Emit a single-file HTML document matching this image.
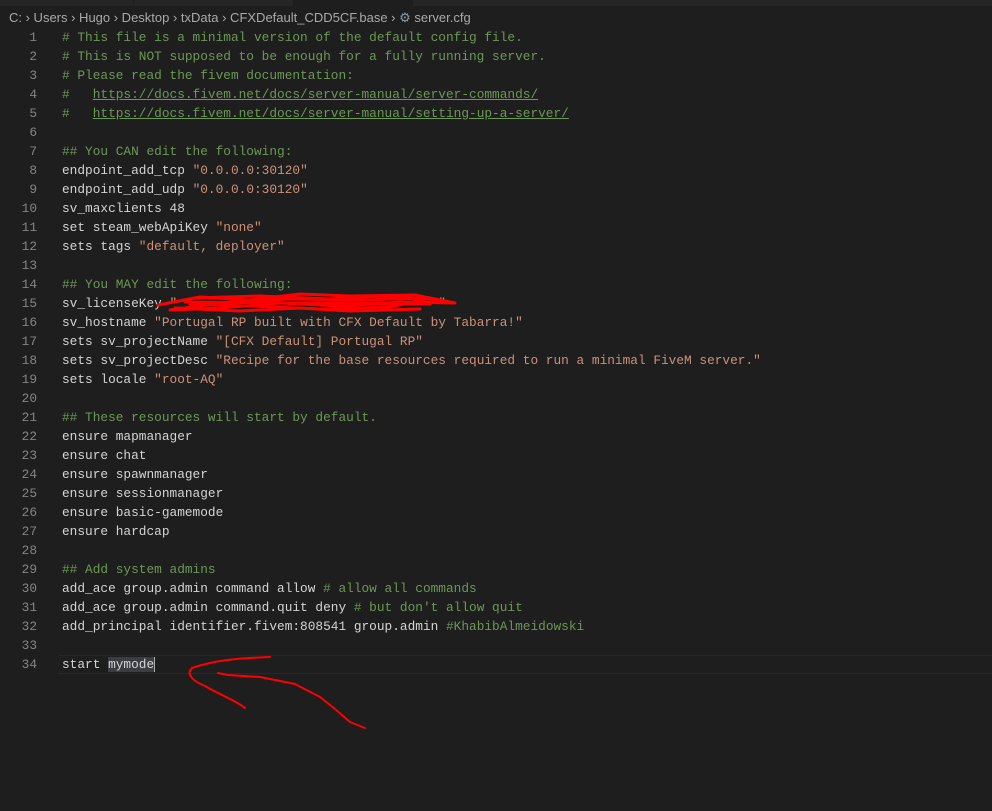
<!DOCTYPE html>
<html><head><meta charset="utf-8"><style>
html,body{margin:0;padding:0;background:#1e1e1e;width:992px;height:811px;overflow:hidden;position:relative}
.tabs{position:absolute;top:0;left:0;width:992px;height:6px;background:#252526}
.bc{position:absolute;top:8px;left:9px;font:13px "Liberation Sans",sans-serif;color:#a9a9a9;white-space:pre;line-height:19px}
.ln{position:absolute;left:0;width:37px;text-align:right;color:#858585;font:12.8px "Liberation Mono",monospace;line-height:19px}
.cd{position:absolute;left:62px;color:#d4d4d4;font:12.8px "Liberation Mono",monospace;line-height:19px;white-space:pre}
.c{color:#6a9955}.s{color:#ce9178}.u{text-decoration:underline}
.cur{position:absolute;left:58px;top:655px;width:934px;height:17px;border-top:1px solid #282828;border-bottom:1px solid #282828}
</style></head><body>
<div class="tabs"><div style="position:absolute;left:293px;width:120px;height:6px;background:#1e1e1e"></div><div style="position:absolute;left:133px;width:1px;height:6px;background:#1e1e1e"></div></div>
<div class="bc">C: › Users › Hugo › Desktop › txData › CFXDefault_CDD5CF.base › <span style="color:#8a9aa8">⚙</span> server.cfg</div>
<div class="cur"></div>
<div id="c"></div>
<script>
const L=[
'<span class="c"># This file is a minimal version of the default config file.</span>',
'<span class="c"># This is NOT supposed to be enough for a fully running server.</span>',
'<span class="c"># Please read the fivem documentation:</span>',
'<span class="c">#   <span class="u">https://docs.fivem.net/docs/server-manual/server-commands/</span></span>',
'<span class="c">#   <span class="u">https://docs.fivem.net/docs/server-manual/setting-up-a-server/</span></span>',
'',
'<span class="c">## You CAN edit the following:</span>',
'endpoint_add_tcp <span class="s">"0.0.0.0:30120"</span>',
'endpoint_add_udp <span class="s">"0.0.0.0:30120"</span>',
'sv_maxclients 48',
'set steam_webApiKey <span class="s">"none"</span>',
'sets tags <span class="s">"default, deployer"</span>',
'',
'<span class="c">## You MAY edit the following:</span>',
'sv_licenseKey <span class="s">"                                  "</span>',
'sv_hostname <span class="s">"Portugal RP built with CFX Default by Tabarra!"</span>',
'sets sv_projectName <span class="s">"[CFX Default] Portugal RP"</span>',
'sets sv_projectDesc <span class="s">"Recipe for the base resources required to run a minimal FiveM server."</span>',
'sets locale <span class="s">"root-AQ"</span>',
'',
'<span class="c">## These resources will start by default.</span>',
'ensure mapmanager','ensure chat','ensure spawnmanager','ensure sessionmanager','ensure basic-gamemode','ensure hardcap',
'',
'<span class="c">## Add system admins</span>',
'add_ace group.admin command allow <span class="c"># allow all commands</span>',
'add_ace group.admin command.quit deny <span class="c"># but don\'t allow quit</span>',
'add_principal identifier.fivem:808541 group.admin <span class="c">#KhabibAlmeidowski</span>',
'',
'start <span style="background:#3a3d41">mymode</span><span style="border-left:1px solid #aeafad"></span>'];
let h='';L.forEach((t,i)=>{const y=28+19*i;h+=`<div class="ln" style="top:${y}px">${i+1}</div><div class="cd" style="top:${y}px">${t}</div>`});
document.getElementById('c').innerHTML=h;
</script>
<svg style="position:absolute;left:0;top:0" width="992" height="811">
<g fill="none" stroke="#ff0000" stroke-linecap="round" stroke-linejoin="round">
<path d="M158 305 L200 297 L250 300 L300 294 L350 296 L415 295 L455 303 L400 302 L340 306 L280 303 L220 308 L170 310 L230 302 L290 299 L360 300 L430 298 L390 307 L320 309 L250 306 L190 304" stroke-width="3"/>
<path d="M195 298 L260 296 L330 299 L380 296 L440 300 M175 308 L240 311 L300 308 L350 311 L420 309 M185 302 L300 303 L430 304" stroke-width="3"/>
<path d="M270 657 C240 658 215 660 192 668 C185 675 195 682 205 686 C220 695 235 700 245 708" stroke-width="2"/>
<path d="M218 673 L228 675 L260 677 L295 684 L320 697 L335 709 L350 722 L365 728" stroke-width="2"/>
</g></svg>
</body></html>
